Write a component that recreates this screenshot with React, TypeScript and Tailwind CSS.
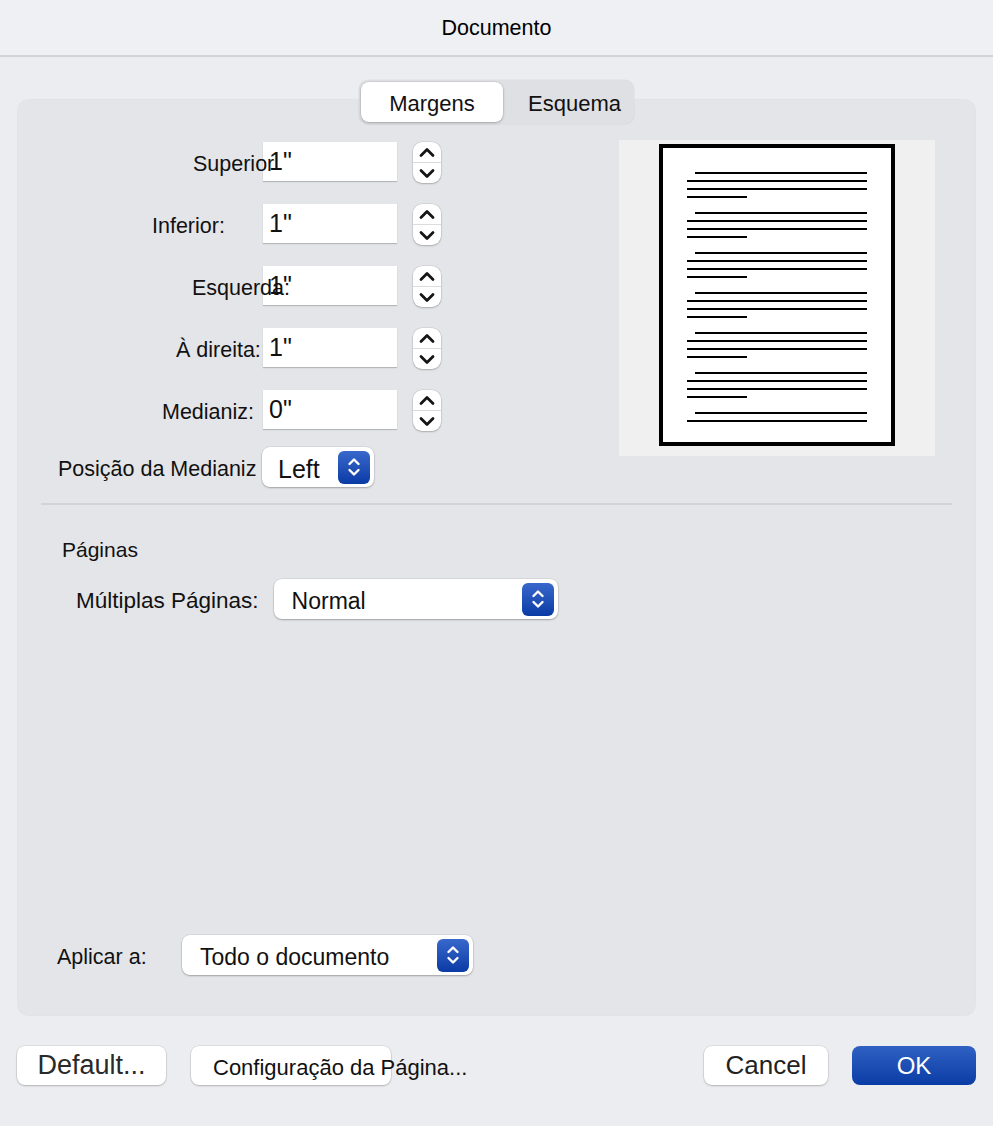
import React from 'react';

const font = { fontFamily: '"Liberation Sans", Arial, sans-serif' };

function SelectArrows() {
    return (
        <svg width="16" height="26" viewBox="0 0 16 26" fill="none">
            <path d="M3.5 10 L8 5.5 L12.5 10" stroke="white" strokeWidth="2.4" strokeLinecap="round" strokeLinejoin="round" />
            <path d="M3.5 16 L8 20.5 L12.5 16" stroke="white" strokeWidth="2.4" strokeLinecap="round" strokeLinejoin="round" />
        </svg>
    );
}

function Stepper() {
    return (
        <div className="ml-[16px] w-[28px] h-[41px] rounded-[9px] bg-white shadow-[0_0_0_0.5px_rgba(0,0,0,0.12),0_1px_2px_rgba(0,0,0,0.2)] flex flex-col items-center">
            <div className="flex-1 flex items-center justify-center">
                <svg width="18" height="11" viewBox="0 0 18 11" fill="none">
                    <path d="M3 8.5 L9 2.5 L15 8.5" stroke="#151515" strokeWidth="2.8" strokeLinecap="round" strokeLinejoin="round" />
                </svg>
            </div>
            <div className="w-full h-px bg-[#dcdcdc]" />
            <div className="flex-1 flex items-center justify-center">
                <svg width="18" height="11" viewBox="0 0 18 11" fill="none">
                    <path d="M3 2.5 L9 8.5 L15 2.5" stroke="#151515" strokeWidth="2.8" strokeLinecap="round" strokeLinejoin="round" />
                </svg>
            </div>
        </div>
    );
}

function Select({ value, width, textSize = 'text-[23px]', pad = 'pl-[18px]' }: { value: string; width: string; textSize?: string; pad?: string }) {
    return (
        <div className={`${width} h-[40px] rounded-[8px] bg-white shadow-[0_0_0_0.5px_rgba(0,0,0,0.1),0_1px_2px_rgba(0,0,0,0.25)] flex items-center justify-between ${pad} pr-[4px]`}>
            <span className={`${textSize} text-[#111] leading-none pt-[4px]`}>{value}</span>
            <div className="w-[32px] h-[33px] rounded-[6px] bg-gradient-to-b from-[#3968cc] to-[#0a3aa5] flex items-center justify-center">
                <SelectArrows />
            </div>
        </div>
    );
}

// labels overflow into the inputs on purpose, like the localised dialog does
const rows = [
    { label: 'Superior', pl: 'pl-[175px]', value: '1"' },
    { label: 'Inferior:', pl: 'pl-[134px]', value: '1"' },
    { label: 'Esquerda:', pl: 'pl-[174px]', value: '1"' },
    { label: 'À direita:', pl: 'pl-[158px]', value: '1"' },
    { label: 'Medianiz:', pl: 'pl-[144px]', value: '0"' },
];

function PagePreview() {
    const groups = [0, 1, 2, 3, 4, 5, 6];
    return (
        <div className="w-[316px] h-[316px] bg-[#f0f0f0] flex justify-center pt-[4px]">
            <svg width="236" height="302" viewBox="0 0 236 302">
                <rect x="2" y="2" width="232" height="298" fill="white" stroke="black" strokeWidth="4" />
                {groups.map((g) => {
                    const y = 29 + g * 40;
                    return (
                        <g key={g} stroke="black" strokeWidth="2">
                            <line x1="36" y1={y} x2="208" y2={y} />
                            <line x1="28" y1={y + 8} x2="208" y2={y + 8} />
                            {g < 6 && <line x1="28" y1={y + 16} x2="208" y2={y + 16} />}
                            {g < 6 && <line x1="28" y1={y + 24} x2="88" y2={y + 24} />}
                        </g>
                    );
                })}
            </svg>
        </div>
    );
}

export default function App() {
    return (
        <div className="w-[993px] h-[1126px] bg-[#ecedf0] flex flex-col text-[#111]" style={font}>
            {/* Title bar */}
            <div className="h-[57px] shrink-0 bg-[#eef0f3] border-b-2 border-[#d3d4d7] flex items-center justify-center">
                <span className="text-[21.5px] text-black pt-[2px]">Documento</span>
            </div>

            {/* Tabs */}
            <div className="relative z-10 flex justify-center mt-[23px]">
                <div className="h-[44px] w-[275px] rounded-[9px] bg-[#dfe0e3] shadow-[0_0_0_0.5px_rgba(0,0,0,0.06)] flex items-center p-[2px]">
                    <div className="w-[142px] h-[40px] rounded-[8px] bg-white shadow-[0_0_0_0.5px_rgba(0,0,0,0.08),0_1px_3px_rgba(0,0,0,0.25)] flex items-center justify-center">
                        <span className="text-[22px] pt-[2px]">Margens</span>
                    </div>
                    <div className="flex-1 flex items-center justify-center pl-[14px]">
                        <span className="text-[22px] pt-[2px]">Esquema</span>
                    </div>
                </div>
            </div>

            {/* Panel */}
            <div className="mx-[18px] -mt-[24px] h-[915px] shrink-0 rounded-[11px] bg-[#e4e5e8] shadow-[0_0_0_1px_rgba(0,0,0,0.04)] flex flex-col pt-[40px] pb-[40px]">
                <div className="flex justify-between pr-[40px]">
                    <div className="flex flex-col pt-[2px]">
                        {rows.map((r) => (
                            <div key={r.label} className="flex items-start h-[62px]">
                                <div className={`w-[245px] shrink-0 ${r.pl} h-[39px] flex items-center pt-[5px] whitespace-nowrap relative z-10`}>
                                    <span className="text-[21.5px]">{r.label}</span>
                                </div>
                                <div className="w-[134px] h-[39px] bg-white shadow-[0_1px_1px_rgba(0,0,0,0.2)] flex items-center pl-[6px]">
                                    <span className="text-[25px] leading-none">{r.value}</span>
                                </div>
                                <Stepper />
                            </div>
                        ))}
                        <div className="flex items-center -mt-[5px]">
                            <div className="w-[244px] shrink-0 pl-[40px] whitespace-nowrap relative z-10 pt-[4px]">
                                <span className="text-[21.5px]">Posição da Medianiz</span>
                            </div>
                            <Select value="Left" width="w-[112px]" textSize="text-[25px]" pad="pl-[16px]" />
                        </div>
                    </div>
                    <PagePreview />
                </div>

                <div className="mx-[23px] mt-[16px] h-[2px] bg-[#d2d3d6]" />

                <div className="pl-[44px] mt-[33px] text-[21px] leading-[24px]">Páginas</div>

                <div className="flex items-center mt-[17px] pl-[58px]">
                    <span className="text-[22.5px] pt-[4px]">Múltiplas Páginas:</span>
                    <div className="ml-[15px]">
                        <Select value="Normal" width="w-[284px]" />
                    </div>
                </div>

                <div className="flex-1" />

                <div className="flex items-center pl-[39px]">
                    <span className="text-[21.5px] w-[125px] pt-[4px]">Aplicar a:</span>
                    <Select value="Todo o documento" width="w-[291px]" />
                </div>
            </div>

            {/* Buttons */}
            <div className="flex items-center mt-[31px] px-[17px]">
                <div className="w-[149px] h-[39px] rounded-[8px] bg-white shadow-[0_0_0_0.5px_rgba(0,0,0,0.12),0_1px_2px_rgba(0,0,0,0.2)] flex items-center justify-center">
                    <span className="text-[27px] text-[#2a2a2a]">Default...</span>
                </div>
                <div className="ml-[25px] w-[200px] h-[39px] rounded-[8px] bg-white shadow-[0_0_0_0.5px_rgba(0,0,0,0.12),0_1px_2px_rgba(0,0,0,0.2)] flex items-center pl-[22px] whitespace-nowrap">
                    <span className="text-[22px] pt-[4px]">Configuração da Página...</span>
                </div>
                <div className="flex-1" />
                <div className="w-[124px] h-[39px] rounded-[8px] bg-white shadow-[0_0_0_0.5px_rgba(0,0,0,0.12),0_1px_2px_rgba(0,0,0,0.2)] flex items-center justify-center">
                    <span className="text-[26px] text-[#222]">Cancel</span>
                </div>
                <div className="ml-[24px] w-[124px] h-[39px] rounded-[8px] bg-gradient-to-b from-[#2f60c2] to-[#0a3ca6] flex items-center justify-center">
                    <span className="text-[24px] text-white">OK</span>
                </div>
            </div>
        </div>
    );
}
